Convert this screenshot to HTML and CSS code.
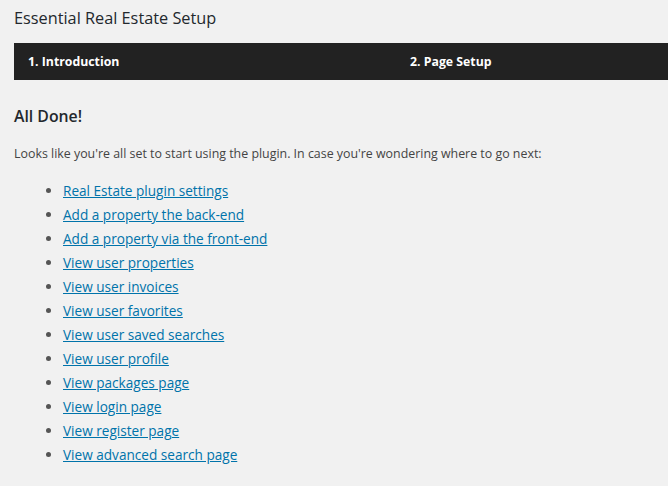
FILE: index.html
```html
<!DOCTYPE html>
<html lang="en">

<head>
  <meta charset="UTF-8">
  <title>Essential Real Estate Setup</title>
  <link rel="stylesheet" href="styles.css">
</head>

<body>
  <div class="wrap">
    <h1>Essential Real Estate Setup</h1>
    <ol class="steps">
      <li>1. Introduction</li>
      <li>2. Page Setup</li>
    </ol>
    <div class="content">
      <h2>All Done!</h2>
      <p>Looks like you're all set to start using the plugin. In case you're wondering where to go next:</p>
      <ul class="links">
        <li><a href="#">Real Estate plugin settings</a></li>
        <li><a href="#">Add a property the back-end</a></li>
        <li><a href="#">Add a property via the front-end</a></li>
        <li><a href="#">View user properties</a></li>
        <li><a href="#">View user invoices</a></li>
        <li><a href="#">View user favorites</a></li>
        <li><a href="#">View user saved searches</a></li>
        <li><a href="#">View user profile</a></li>
        <li><a href="#">View packages page</a></li>
        <li><a href="#">View login page</a></li>
        <li><a href="#">View register page</a></li>
        <li><a href="#">View advanced search page</a></li>
      </ul>
    </div>
  </div>
</body>

</html>
```

FILE: styles.css
```css
body {
  margin: 0;
  background-color: #f1f1f1;
  color: #444;
  font-family: "Open Sans", "Noto Sans", sans-serif;
  font-size: 12.4px;
}

.wrap {
  padding-left: 14px;
}

h1 {
  margin: 0;
  padding-top: 6px;
  font-size: 16.3px;
  font-weight: 400;
  line-height: 24px;
  color: #23282d;
}

.steps {
  list-style: none;
  margin: 13px 0 0;
  padding: 0;
  display: grid;
  grid-template-columns: 382px 1fr;
  background: #222;
  height: 37px;
}

.steps li {
  padding: 0 14px;
  line-height: 37px;
  color: #fff;
  font-weight: 700;
  font-size: 12.3px;
}

h2 {
  margin: 25px 0 0;
  font-size: 15.8px;
  font-weight: 600;
  line-height: 22px;
  color: #23282d;
}

p {
  margin: 17px 0 0;
  line-height: 20px;
}

.links {
  margin: 15px 0 0;
  padding-left: 49px;
  list-style: disc;
  color: #555;
}

.links li {
  line-height: 24px;
  font-size: 13.6px;
}

.links a {
  color: #0073aa;
}
```
